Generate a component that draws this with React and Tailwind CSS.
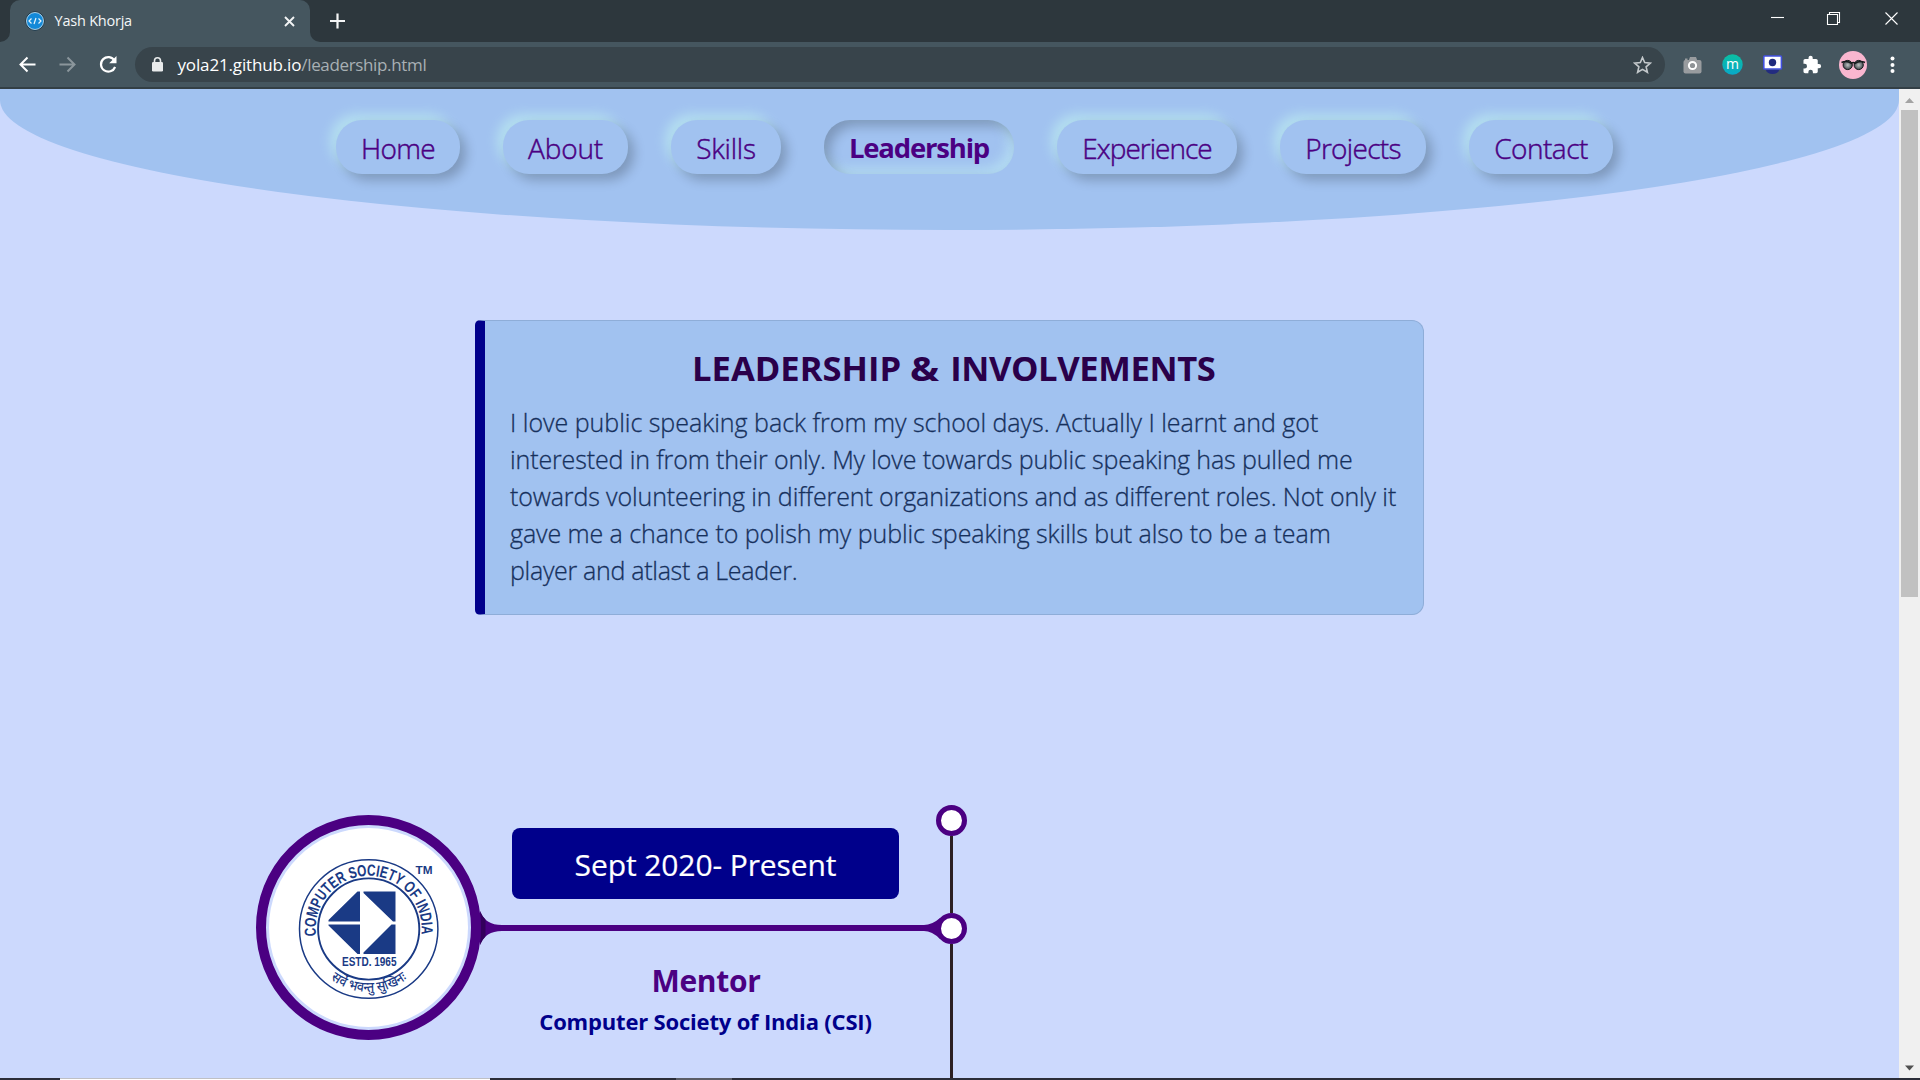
import React from "react";

const nav = [
  { label: "Home", box: "w-[124px] tracking-[-0.65px]" },
  { label: "About", box: "w-[125px] tracking-[-0.2px]" },
  { label: "Skills", box: "w-[110px] tracking-[-0.2px]" },
  { label: "Leadership", box: "w-[190px] tracking-[-1.2px]", active: true },
  { label: "Experience", box: "w-[180px] tracking-[-1px]" },
  { label: "Projects", box: "w-[146px] tracking-[-0.7px]" },
  { label: "Contact", box: "w-[144px] tracking-[-0.5px]" },
];

const intro = [
  { text: "I love public speaking back from my school days. Actually I learnt and got", fit: "tracking-[-0.02px]" },
  { text: "interested in from their only. My love towards public speaking has pulled me", fit: "tracking-[-0.13px]" },
  { text: "towards volunteering in different organizations and as different roles. Not only it", fit: "tracking-[-0.12px]" },
  { text: "gave me a chance to polish my public speaking skills but also to be a team", fit: "tracking-[-0.08px]" },
  { text: "player and atlast a Leader.", fit: "tracking-[-0.3px]" },
];

function TabStrip() {
  return (
    <div className="flex h-[42px] bg-[#2d373d]">
      <div className="w-[10px] bg-[#45565f]"><div className="h-full rounded-br-[10px] bg-[#2d373d]" /></div>
      <div className="flex h-full w-[300px] items-center rounded-t-[10px] bg-[#45565f] pl-[15px]">
        <svg width="20" height="20" viewBox="0 0 20 20">
          <circle cx="10" cy="10" r="9.2" fill="#1389d8" stroke="#1d2f3a" strokeWidth="1" />
          <circle cx="10" cy="10" r="8.5" fill="none" stroke="#cfe3ef" strokeWidth="0.8" />
          <path d="M6.5 7.5 4 10l2.500 2.500M13.500 7.500 16 10l-2.500 2.500M11 7 9 13" fill="none" stroke="#e8f4fb" strokeWidth="1.200" />
        </svg>
        <span className="ml-[9.500px] text-[14.500px] tracking-[-0.22px] text-[#f4f7f8]">Yash Khorja</span>
        <svg className="mr-[15px] ml-auto" width="11" height="11" viewBox="0 0 11 11"><path d="m1 1 9 9M10 1l-9 9" stroke="#f2f4f5" strokeWidth="1.900" /></svg>
      </div>
      <div className="w-[10px] bg-[#45565f]"><div className="h-full rounded-bl-[10px] bg-[#2d373d]" /></div>
      <svg className="mt-[13px] ml-[10px]" width="15" height="16" viewBox="0 0 15 16"><path d="M7.500 .5v15M0 8h15" stroke="#f4f5f6" strokeWidth="2.200" /></svg>
      <div className="mr-[22px] ml-auto flex pt-[12px]">
        <svg width="127" height="14" viewBox="0 0 127 14" fill="none" stroke="#fff" strokeWidth="1.100">
          <path d="M0 5.500h13" />
          <path d="M56.500 2.500h10v10h-10zM58.500 2.500v-2h10v10h-2" />
          <path d="m114.500 .5 12 12m0-12-12 12" />
        </svg>
      </div>
    </div>
  );
}

function Toolbar() {
  return (
    <div className="flex h-[47px] items-center border-b-2 border-[#333f45] bg-[#45565f]">
      <svg width="135" height="45" viewBox="0 0 135 45" fill="none" strokeWidth="2">
        <path d="M35.500 22.500H21M27.500 15.500l-7 7 7 7" stroke="#fff" />
        <path d="M59.500 22.500H74M67.500 15.500l7 7-7 7" stroke="#8b969c" />
        <path d="M114.500 18.500a7.300 7.300 0 1 0 .6 6.500" stroke="#fff" strokeWidth="2.200" />
        <path d="M116.500 14v7.300h-7.300z" fill="#fff" />
      </svg>
      <div className="flex h-[35px] w-[1530px] items-center rounded-full bg-[#38444b] pl-[17px]">
        <svg width="11" height="15" viewBox="0 0 11 15"><rect y="5" width="11" height="9.500" rx="1.300" fill="#e9ebec" /><path d="M2.500 6V3.800a3 3 0 0 1 6 0V6" fill="none" stroke="#e9ebec" strokeWidth="1.600" /></svg>
        <span className="ml-[14.500px] text-[17px] text-[#a8b0b4]"><span className="tracking-[-0.15px] text-white">yola21.github.io</span><span className="tracking-[-0.35px]">/leadership.html</span></span>
        <svg className="mr-[13px] ml-auto" width="19" height="18" viewBox="0 0 19 18"><path d="m9.500 1.500 2.200 5.100 5.600.5-4.200 3.700 1.300 5.500-4.900-2.900-4.900 2.900 1.300-5.500-4.200-3.700 5.600-.5z" fill="none" stroke="#c3c8cb" strokeWidth="1.600" /></svg>
      </div>
      <svg width="255" height="45" viewBox="1665 42 255 45">
        <g fill="#999c9f">
          <rect x="1683.500" y="60" width="18" height="13.500" rx="2" /><path d="m1688.500 61 1.500-4h6l1.500 4z" /><path d="M1685 58.500h2.500v2H1685z" />
        </g>
        <circle cx="1692.500" cy="65.500" r="3.600" fill="#8f9396" stroke="#fff" strokeWidth="2" />
        <defs>
          <linearGradient id="mote" x1="0" y1="0" x2="0" y2="1"><stop stopColor="#0bbfa2" /><stop offset="1" stopColor="#08a8c8" /></linearGradient>
          <radialGradient id="lens"><stop stopColor="#bfc3c4" /><stop offset="1" stopColor="#3f484b" /></radialGradient>
        </defs>
        <circle cx="1732.500" cy="64.500" r="10.200" fill="url(#mote)" />
        <text x="1732.500" y="68.600" textAnchor="middle" fontSize="14" fill="#fff">m</text>
        <path d="M1766 70h13a6.500 4 0 0 1-13 0" fill="#232c80" />
        <rect x="1763.800" y="56" width="17.600" height="13" rx=".8" fill="#fff" stroke="#4250e0" strokeWidth="1.600" />
        <circle cx="1772.500" cy="62.500" r="3.700" fill="#1f2a7d" />
        <path transform="translate(1801.800 54.800) scale(.84)" fill="#fff" d="M20.500 11H19V7c0-1.100-.9-2-2-2h-4V3.500a2.500 2.500 0 0 0-5 0V5H4c-1.100 0-2 .9-2 2v3.800h1.500a2.700 2.700 0 0 1 0 5.400H2V20c0 1.100.9 2 2 2h3.800v-1.500a2.700 2.700 0 0 1 5.400 0V22H17c1.100 0 2-.9 2-2v-4h1.500a2.500 2.500 0 0 0 0-5" />
        <circle cx="1853" cy="65" r="14" fill="#f9b6cf" />
        <g stroke="#171b1d" fill="url(#lens)">
          <circle cx="1847.700" cy="65" r="4.600" strokeWidth="1" /><circle cx="1858.700" cy="65" r="4.600" strokeWidth="1" />
          <path d="M1841.500 62.500q5-2.500 10 .8 1.700-1.500 3.500 0 5-3.300 10-.8" fill="none" strokeWidth="1.500" />
        </g>
        <g fill="#fff"><circle cx="1892.500" cy="58.500" r="2" /><circle cx="1892.500" cy="65" r="2" /><circle cx="1892.500" cy="71" r="2" /></g>
      </svg>
    </div>
  );
}

function Nav() {
  return (
    <header className="flex h-[141px] gap-[43px] rounded-b-[50%_130px] bg-[#a1c2f0] pt-[31px] pl-[336px]">
      {nav.map((n) => (
        <a
          key={n.label}
          className={
            "flex h-[54px] justify-center rounded-[26px] leading-[56px] whitespace-nowrap text-[#4b0082] " +
            n.box +
            (n.active
              ? " text-[27.500px] font-bold shadow-[inset_6px_6px_12px_rgba(0,0,0,0.22),inset_-6px_-6px_12px_rgba(182,224,242,0.8)]"
              : " bg-[#a1c2f0] text-[28px] font-light [-webkit-text-stroke:0.45px_#4b0082] shadow-[6px_6px_12px_rgba(0,0,0,0.22),-6px_-6px_12px_#b4dff0]")
          }
        >
          <span>{n.label}</span>
        </a>
      ))}
    </header>
  );
}

function IntroCard() {
  return (
    <section className="mt-[90px] ml-[475px] h-[295px] w-[949px] rounded-l-[5px] rounded-r-[12px] border border-l-[10px] border-[#8eadd8] border-l-[#00008b] bg-[#a1c2f0]">
      <h1 className="mt-[22px] pl-[207px] text-[34.600px] leading-[50px] font-bold whitespace-nowrap text-[#2a004a]">
        LEADERSHIP <span className="mr-[5px] inline-block origin-left scale-x-[1.12]">&amp;</span> <span className="tracking-[-0.4px]">INVOLVEMENTS</span>
      </h1>
      <p className="mt-[11px] pl-[25px] text-[25px] leading-[37px] font-light whitespace-nowrap text-[#16305c] [-webkit-text-stroke:0.3px_#16305c]">
        {intro.map((l) => (
          <span key={l.text} className="block"><span className={l.fit}>{l.text}</span></span>
        ))}
      </p>
    </section>
  );
}

function SocietyLogo() {
  return (
    <div className="flex size-[225px] shrink-0 rounded-full border-[10px] border-[#4b0082] p-[3px]">
      <svg className="rounded-full bg-white" width="199" height="199" viewBox="269.500 828 199 199">
        <g fill="none" stroke="#1a3a85" strokeWidth="1.500">
          <circle cx="369.200" cy="929" r="69.200" /><circle cx="369.200" cy="929" r="50.600" strokeWidth="1.900" />
        </g>
        <path id="ringTop" d="M316.700 936a53 53 0 1 1 105 0" fill="none" />
        <path id="ringBottom" d="M306.200 929a63 63 0 0 0 126 0" fill="none" />
        <g fill="#1a3a85">
          <path d="M360.500 891.500v30h-31.500v-1.500l29-28.500zM364 891.500h32v30h-2.500l-29.500-28.500zM329 924.500h31.500v29.500h-2.500l-29-28.500zM396 924.500v29.500h-32v-1.500l28-28z" />
          <text fontSize="16" fontWeight="700" className="font-['Liberation_Sans_Narrow','Liberation_Sans',sans-serif]">
            <textPath href="#ringTop" startOffset="0" textLength="179" lengthAdjust="spacingAndGlyphs">COMPUTER SOCIETY OF INDIA</textPath>
          </text>
          <text x="342.500" y="966" fontSize="12" fontWeight="700" textLength="54.500" lengthAdjust="spacingAndGlyphs" className="font-['Liberation_Sans',sans-serif]">ESTD. 1965</text>
          <text x="416" y="873.500" fontSize="10.500" fontWeight="700" textLength="17" lengthAdjust="spacingAndGlyphs" className="font-['Liberation_Sans',sans-serif]">TM</text>
          <text fontSize="14" fontWeight="500" className="font-['Noto_Sans','Noto_Sans_Devanagari',sans-serif]">
            <textPath href="#ringBottom" startOffset="58" textLength="82" lengthAdjust="spacingAndGlyphs">सर्वे भवन्तु सुखिनः</textPath>
          </text>
        </g>
      </svg>
    </div>
  );
}

function Timeline() {
  return (
    <section className="mt-[190px] flex pl-[256px]">
      <div className="pt-[10px]"><SocietyLogo /></div>
      <div className="flex h-[273px] w-[455px] flex-col pt-[23px]">
        <div className="ml-[31px] h-[71px] w-[387px] rounded-[8px] bg-[#00008b] text-center text-[30px] leading-[74px] tracking-[-0.1px] text-white [-webkit-text-stroke:0.2px_#fff]">Sept 2020- Present</div>
        <svg className="relative mt-[12px] -ml-[2px] overflow-visible" width="462" height="34" viewBox="479 911 462 34">
          <path d="M480 911q5 14 22 14H924q8 0 16-7v21q-8-8-16-8H502q-17 0-22 14z" fill="#4b0082" />
          <path d="M480 911q2 5 5.500 8.500v17q-3.500 3.500-5.500 8.500 2-17 0-34" fill="#33005c" />
        </svg>
        <div className="mt-[16px] pr-[5px] text-center text-[30px] leading-[40px] font-bold tracking-[-0.3px] text-[#4b0082]">Mentor</div>
        <div className="mt-[3px] pr-[6px] text-center text-[22px] leading-[34px] font-bold tracking-[-0.18px] whitespace-nowrap text-[#00008b]">Computer Society of India (CSI)</div>
      </div>
      <div className="z-10 flex h-[273px] w-[31px] flex-col items-center">
        <div className="size-[31px] shrink-0 rounded-full border-[5px] border-[#4b0082] bg-white" />
        <div className="h-[77px] w-[3px] shrink-0 bg-[#2c2023]" />
        <div className="size-[31px] shrink-0 rounded-full border-[5px] border-[#4b0082] bg-white" />
        <div className="w-[3px] grow bg-[#2c2023]" />
      </div>
    </section>
  );
}

function Scrollbar() {
  return (
    <div className="flex h-full w-[21px] flex-col items-center bg-[#f0f0f0]">
      <svg width="21" height="21" viewBox="0 0 21 21"><path d="m6 14 4.500-5L15 14z" fill="#a3a3a3" /></svg>
      <div className="h-[487px] w-[17px] bg-[#c1c1c1]" />
      <svg className="mt-auto" width="21" height="21" viewBox="0 0 21 21"><path d="m6 8.500 4.500 5 4.500-5z" fill="#505050" /></svg>
    </div>
  );
}

export default function App() {
  return (
    <div className="flex h-[1080px] w-[1920px] flex-col overflow-hidden font-['Open_Sans','Noto_Sans',sans-serif]">
      <TabStrip />
      <Toolbar />
      <div className="flex h-[989px]">
        <main className="h-full w-[1899px] overflow-hidden bg-[#ccd9fd]">
          <Nav />
          <IntroCard />
          <Timeline />
        </main>
        <Scrollbar />
      </div>
      <div className="flex h-[2px] bg-[#2b2d38]">
        <div className="ml-[60px] w-[430px] border-t border-[#bfc0c4] bg-white" />
        <div className="ml-[186px] w-[56px] bg-[#5b5d66]" />
      </div>
    </div>
  );
}
